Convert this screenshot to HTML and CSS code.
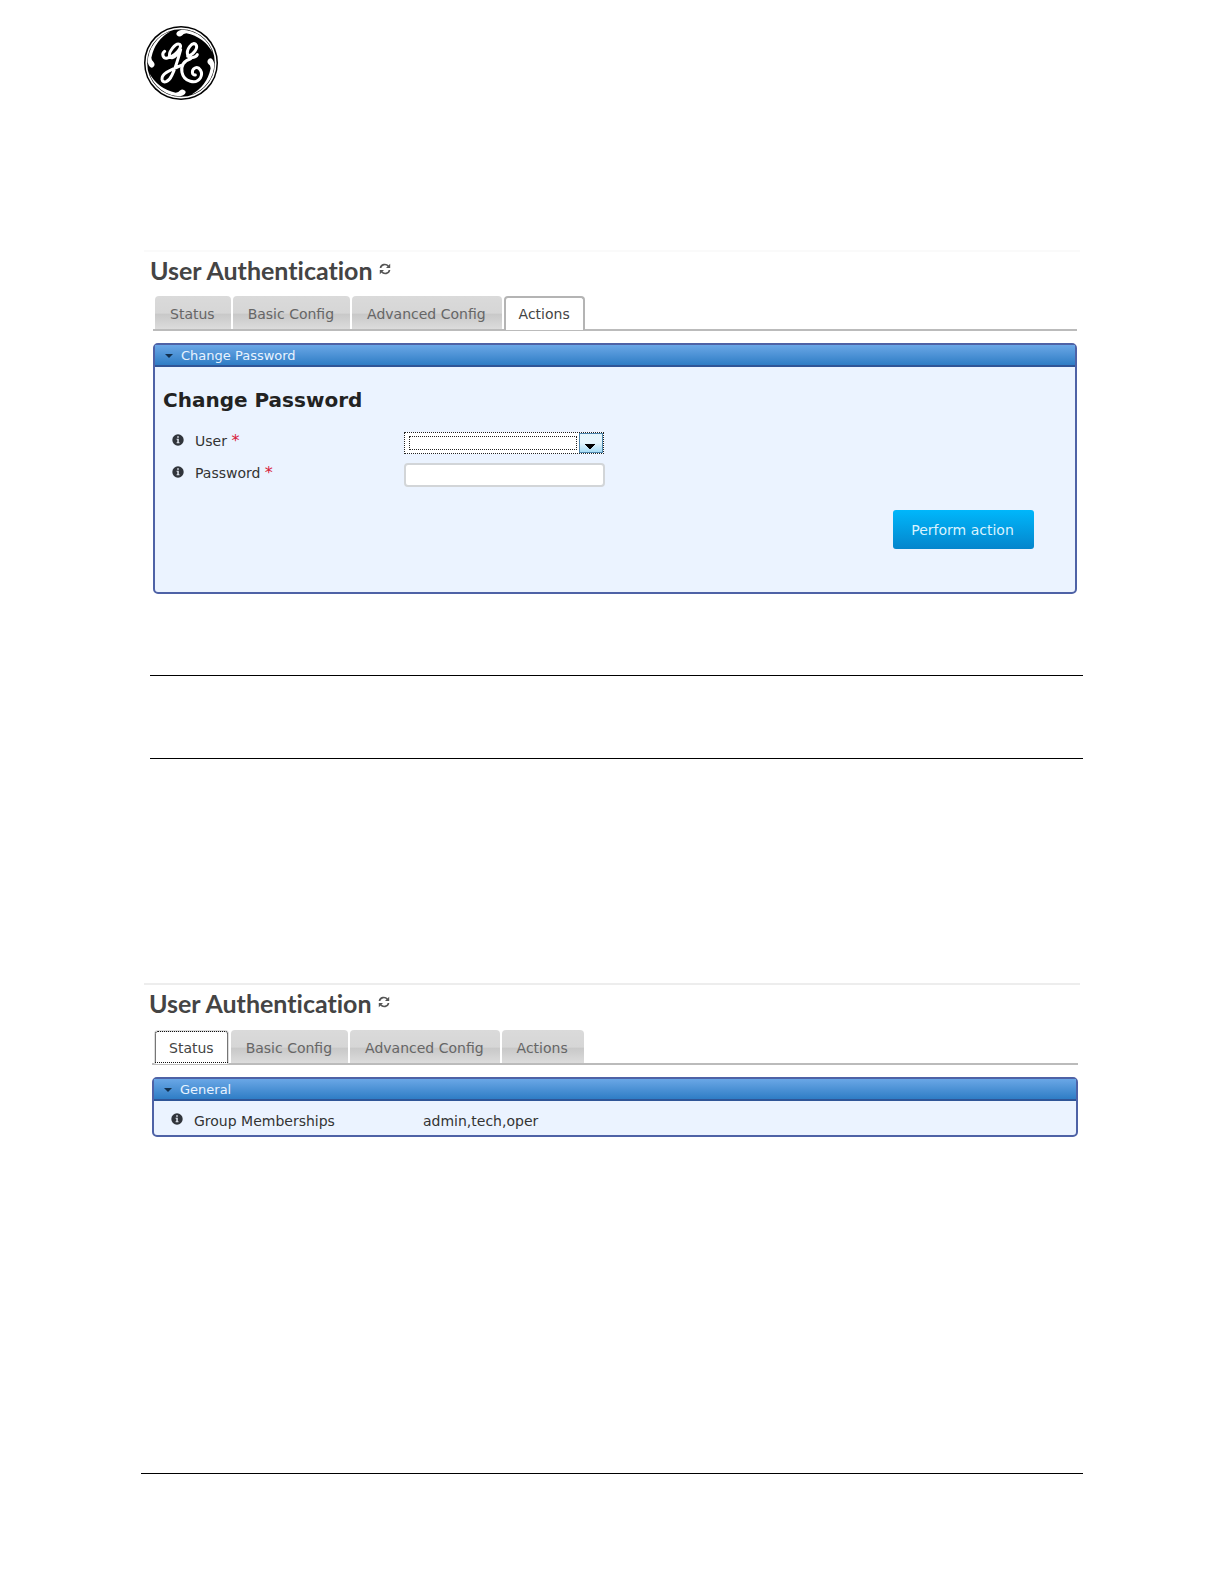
FILE: index.html
```html
<!DOCTYPE html>
<html lang="en">
<head>
<meta charset="utf-8">
<title>User Authentication</title>
<link rel="stylesheet" href="styles.css">
</head>
<body>
<svg class="symbols" aria-hidden="true">
  <symbol id="refresh" viewBox="0 0 12 12">
    <path d="M1.500 5C2 1.300 7 .3 9.300 3.200M10.500 7C10 10.700 5 11.700 2.700 8.800" fill="none" stroke="#555" stroke-width="1.700"/>
    <path d="M11.200.8V5H7ZM.8 11.200V7H5Z" fill="#555"/>
  </symbol>
  <symbol id="info" viewBox="0 0 12 12">
    <circle cx="6" cy="6" r="5.700" fill="#30343b"/>
    <path d="M5.200 2.300H6.800V3.800H5.200ZM4.600 4.800H6.800V8.200H7.500V9.300H4.600V8.200H5.300V5.800H4.600Z" fill="#dfe5ee"/>
  </symbol>
</svg>
<div class="page">
  <header class="masthead">
    <svg class="logo" viewBox="24 24 222 222" role="img" aria-label="GE">
      <defs>
        <path id="swirl" d="M122 51Q117 41 137 35A100 100 0 0 1 230 104Q204 57 151 46Q141 47 139 52Q130 60 122 51Z"/>
      </defs>
      <circle cx="135" cy="135" r="111"/>
      <circle cx="135" cy="135" r="104" fill="none" stroke="#fff" stroke-width="5"/>
      <g fill="#fff">
        <use href="#swirl"/>
        <use href="#swirl" transform="rotate(90 135 135)"/>
        <use href="#swirl" transform="rotate(180 135 135)"/>
        <use href="#swirl" transform="rotate(270 135 135)"/>
      </g>
      <g fill="none" stroke="#fff" stroke-width="9" stroke-linecap="round" stroke-linejoin="round">
        <path d="M86 100C75 108 82 123 94 120C115 116 142 88 131 79C119 72 94 106 102 117C111 127 128 104 134 95C125 128 117 155 107 173C99 191 81 199 78 184C75 164 112 153 136 142"/>
        <path d="M155 115C174 109 188 88 179 79C168 71 150 94 155 111C161 124 180 119 184 110M164 122C143 127 134 145 138 163C144 192 180 200 193 180C203 163 189 144 177 150C165 156 168 173 178 171"/>
      </g>
    </svg>
  </header>

  <main>
    <section class="screen">
      <h1 class="title">User Authentication <button class="refresh" type="button" aria-label="Refresh"><svg><use href="#refresh"/></svg></button></h1>
      <div class="tabs" role="tablist">
        <button class="tab" type="button" role="tab">Status</button>
        <button class="tab" type="button" role="tab">Basic Config</button>
        <button class="tab" type="button" role="tab">Advanced Config</button>
        <button class="tab active" type="button" role="tab" aria-selected="true">Actions</button>
      </div>
      <div class="panel">
        <h2 class="panel-head"><span class="caret"></span>Change Password</h2>
        <form class="form">
          <h3 class="form-title">Change Password</h3>
          <div class="row">
            <svg class="info"><use href="#info"/></svg>
            <label class="name" for="user">User <span class="required">*</span></label>
            <span class="picker"><select id="user"><option></option></select></span>
          </div>
          <div class="row">
            <svg class="info"><use href="#info"/></svg>
            <label class="name" for="password">Password <span class="required">*</span></label>
            <input class="field" id="password" type="password">
          </div>
          <div class="actions"><button class="perform" type="button">Perform action</button></div>
        </form>
      </div>
    </section>

    <div class="note"></div>

    <section class="screen second">
      <h1 class="title">User Authentication <button class="refresh" type="button" aria-label="Refresh"><svg><use href="#refresh"/></svg></button></h1>
      <div class="tabs" role="tablist">
        <button class="tab active focused" type="button" role="tab" aria-selected="true">Status</button>
        <button class="tab" type="button" role="tab">Basic Config</button>
        <button class="tab" type="button" role="tab">Advanced Config</button>
        <button class="tab" type="button" role="tab">Actions</button>
      </div>
      <div class="panel">
        <h2 class="panel-head"><span class="caret"></span>General</h2>
        <div class="row status">
          <svg class="info"><use href="#info"/></svg>
          <span class="name">Group Memberships</span>
          <span class="value">admin,tech,oper</span>
        </div>
      </div>
    </section>
  </main>
  <footer class="footer"></footer>
</div>
</body>
</html>
```
FILE: styles.css
```css
* { box-sizing: border-box; }

body {
  margin: 0;
  background: #fff;
  color: #333;
  font: 14px/20px "DejaVu Sans", Verdana, sans-serif;
}

h1, h2, h3 { margin: 0; }
button { font: inherit; border: 0; padding: 0; }
.symbols { display: none; }

.page {
  display: flex;
  flex-direction: column;
  min-height: 100vh;
  padding: 26px 141px 0;
}

.masthead { padding-left: 3px; height: 224px; }
.logo { display: block; width: 74px; height: 74px; }
main { flex: 1; }

.screen {
  margin: 0 3px;
  padding: 0 3px 0 9px;
  border-top: 2px solid #fafafa;
}

.title {
  display: flex;
  gap: 6px;
  margin-left: -3px;
  padding-top: 2px;
  color: #444;
  font: 700 25px/32px Lato, sans-serif;
  font-variant-ligatures: none;
}

.refresh { width: 12px; height: 12px; margin-top: 9px; background: none; }
.refresh svg { display: block; width: 12px; height: 12px; }

.tabs {
  display: flex;
  gap: 2px;
  margin-top: 10px;
  padding-left: 2px;
  border-bottom: 2px solid #bbb;
}

.tab {
  height: 33px;
  padding: 2px 16px 0 15px;
  border-radius: 4px 4px 0 0;
  background: linear-gradient(#dadada, #d6d6d6 52%, #c8c8c8 55%, #dcdcdc);
  color: #666;
}

.tab.active {
  height: 34px;
  margin-bottom: -2px;
  padding: 0 13px;
  border: 2px solid #b4b4b4;
  border-bottom: 0;
  background: #fff;
  color: #444;
}

.tab.active.focused {
  margin-bottom: -1px;
  border-color: #ddd;
  outline: 1px dotted #111;
  outline-offset: -2px;
}

.panel {
  margin-top: 12px;
  border: 2px solid #4e62a6;
  border-radius: 5px;
  background: #ebf3ff;
}

.panel-head {
  display: flex;
  align-items: center;
  gap: 8px;
  height: 22px;
  padding: 1px 0 0 10px;
  border-bottom: 2px solid #2f5597;
  background: linear-gradient(#6aa7e6, #2f7dc5);
  color: #e8f3ff;
  font-size: 13px;
  font-weight: normal;
  line-height: 20px;
}

.caret {
  border: 4px solid transparent;
  border-top: 4px solid #12304f;
  border-bottom: 0;
}

.form { padding: 19px 41px 43px 8px; }
.form-title { margin-bottom: 18px; color: #222; font-size: 20px; line-height: 28px; }

.row { display: flex; height: 32px; padding-left: 9px; }
.info { flex: none; width: 12px; height: 12px; margin: 2px 11px 0 0; }
.name { width: 209px; margin-top: -1px; }
.required { color: #d8203a; font-size: 16px; line-height: 16px; }

.picker {
  position: relative;
  width: 200px;
  height: 22px;
  border: 1px dotted #222;
  background: #fff;
}

.picker select {
  display: block;
  width: 100%;
  height: 20px;
  padding: 0 24px 0 6px;
  border: 0;
  outline: 0;
  background: transparent;
  font: inherit;
  appearance: none;
}

.picker::before {
  content: "";
  position: absolute;
  inset: 3px 26px 3px 4px;
  border: 1px dotted #222;
}

.picker::after {
  content: "";
  position: absolute;
  inset: 0 0 0 auto;
  width: 22px;
  border: 1px solid #4d86ad;
  background:
    linear-gradient(45deg, transparent 50%, #000 50%) 5px 10px / 5px 5px no-repeat,
    linear-gradient(-45deg, transparent 50%, #000 50%) 10px 10px / 5px 5px no-repeat,
    linear-gradient(#e5f5fc 48%, #a5dbf5);
  background:
    conic-gradient(from -45deg at 50% 100%, #000 90deg, transparent 0) 5px 10px / 10px 5px no-repeat,
    linear-gradient(#e5f5fc 48%, #a5dbf5);
  pointer-events: none;
}

.field {
  width: 201px;
  height: 24px;
  margin-top: -1px;
  padding: 0 6px;
  border: 2px solid #d2d5d8;
  border-radius: 4px;
  background: #fff;
  font: inherit;
}

.actions { display: flex; justify-content: flex-end; margin-top: 14px; }

.perform {
  width: 141px;
  height: 39px;
  padding-right: 2px;
  border-radius: 3px;
  background: linear-gradient(#00b7fb, #0485cc);
  color: #d9f3ff;
}

.note {
  height: 84px;
  margin: 81px 0 224px 9px;
  border: solid #000;
  border-width: 1px 0;
}

.second { padding: 0 2px 0 8px; border-color: #ededed; }
.second .tabs { margin-top: 11px; }
.status { height: 34px; padding: 10px 0 0 17px; }
.status .name { width: 229px; margin-top: 0; }

.footer { height: 111px; border-top: 1px solid #000; }
```
